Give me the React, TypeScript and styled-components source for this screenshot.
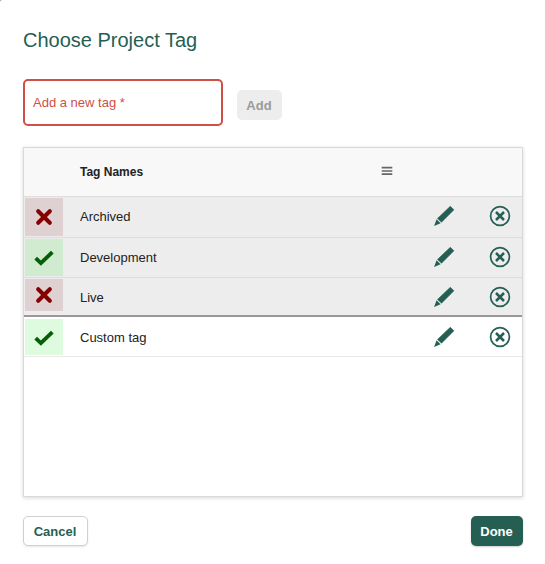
import React from "react";
import styled, { createGlobalStyle } from "styled-components";

const GlobalStyle = createGlobalStyle`
  *, *::before, *::after { box-sizing: border-box; }
  body {
    margin: 0;
    background: #8a8a8a;
    color: #222;
    font-family: "Liberation Sans", Arial, sans-serif;
    font-size: 13px;
  }
`;

const Dialog = styled.main`
  display: flex;
  flex-direction: column;
  width: 545px;
  height: 564px;
  padding: 28px 22px 0 23px;
  border-top-left-radius: 2px;
  background: #fff;
`;

const Title = styled.h1`
  margin: 0;
  color: #255f53;
  font-size: 20px;
  font-weight: 400;
  line-height: 24px;
`;

const AddForm = styled.form`
  display: flex;
  align-items: center;
  gap: 14px;
  margin-top: 27px;
`;

const TagInput = styled.input`
  width: 200px;
  height: 47px;
  padding: 0 8px;
  border: 2px solid #ce5047;
  border-radius: 5px;
  outline: 0;
  background: #fff;
  font: 13px "Liberation Sans", Arial, sans-serif;
  &::placeholder { color: #ce5047; opacity: 1; }
`;

const Button = styled.button<{ $kind: "muted" | "plain" | "primary" }>`
  height: 30px;
  padding: 0 1px 0 0;
  border-radius: 5px;
  font: 700 13px "Liberation Sans", Arial, sans-serif;
  ${({ $kind }) =>
    $kind === "muted"
      ? "width: 45px; margin-top: 5px; border: 0; background: #ededed; color: #9b9b9b;"
      : $kind === "plain"
      ? "width: 65px; border: 1px solid #d0d0d0; background: #fff; color: #255f53; box-shadow: 0 1px 2px rgba(0,0,0,.1);"
      : "width: 52px; border: 0; background: #255f53; color: #fff; box-shadow: 0 1px 2px rgba(0,0,0,.2);"}
`;

const Grid = styled.section`
  width: 500px;
  height: 350px;
  margin-top: 21px;
  border: 1px solid #d9d9d9;
  background: #fff;
  box-shadow: 0 1px 4px rgba(0, 0, 0, 0.16);
`;

const GridHeader = styled.div`
  display: grid;
  grid-template-columns: 56px 301px 1fr 44px;
  align-items: center;
  height: 49px;
  border-bottom: 1px solid #dcdcdc;
  background: #f8f8f8;
  font-size: 12px;
  font-weight: 700;
`;

const HeaderName = styled.span`
  grid-column: 2;
  line-height: 16px;
`;

const MenuIcon = styled.svg`
  display: block;
  margin-bottom: 2px;
`;

const Row = styled.div<{ $height: number; $locked: boolean; $divider: boolean }>`
  display: grid;
  grid-template-columns: 56px 1fr 20px 36px 20px 12px;
  height: ${({ $height }) => $height}px;
  margin-bottom: ${({ $divider }) => ($divider ? 1 : 0)}px;
  border-bottom: ${({ $divider, $locked }) =>
    $divider ? "2px solid #999" : $locked ? "1px solid #dcdcdc" : "1px solid #e9e9e9"};
  background: ${({ $locked }) => ($locked ? "#ededed" : "#fff")};
`;

const Status = styled.div<{ $on: boolean; $locked: boolean; $height: number }>`
  display: flex;
  justify-content: center;
  width: 38px;
  height: ${({ $height }) => $height}px;
  margin: 1px 0 0 1px;
  padding-top: ${({ $on }) => ($on ? 11 : 10)}px;
  background: ${({ $on, $locked }) =>
    $on ? ($locked ? "#d1ebd1" : "#dffbdf") : "#dfd1d1"};
`;

const StatusIcon = styled.svg<{ $lift: number }>`
  display: block;
  margin-top: ${({ $lift }) => -$lift}px;
`;

const Name = styled.span`
  line-height: 39px;
`;

const Action = styled.button<{ $column: number }>`
  grid-column: ${({ $column }) => $column};
  width: 20px;
  height: 20px;
  margin: 9px 0 0;
  padding: 0;
  border: 0;
  background: none;
  color: #255f53;
`;

const Icon = styled.svg`
  display: block;
  overflow: visible;
`;

const Footer = styled.footer`
  display: flex;
  justify-content: space-between;
  width: 500px;
  margin-top: 19px;
`;

const Check = () => (
  <StatusIcon $lift={0} width="20" height="17" viewBox="0 0 20 17">
    <path d="M1.7 8.1 6.9 13.1 18.3 2.2" fill="none" stroke="#056005" strokeWidth="3.9" />
  </StatusIcon>
);

const Cross = ({ lift }: { lift: number }) => (
  <StatusIcon $lift={lift} width="18" height="18" viewBox="0 0 18 18">
    <path d="M3.2 3.2 14.8 14.8M14.8 3.2 3.2 14.8" fill="none" stroke="#850000" strokeWidth="4.1" strokeLinecap="round" />
  </StatusIcon>
);

const Pencil = () => (
  <Icon width="20" height="20" viewBox="0 0 20 20">
    <path d="M16.3 .3 19.9 3.8 7.5 16.2 3.5 12.4Z" fill="currentColor" stroke="currentColor" strokeWidth=".6" strokeLinejoin="round" />
    <path d="M2.6 13.3 6.6 17.2.1 20Z" fill="currentColor" />
  </Icon>
);

const CircleX = () => (
  <Icon width="20" height="20" viewBox="0 0 20 20">
    <circle cx="10" cy="10" r="9.4" fill="none" stroke="currentColor" strokeWidth="1.7" />
    <path d="M6 6 14 14M14 6 6 14" fill="none" stroke="currentColor" strokeWidth="2.5" />
  </Icon>
);

const tags = [
  { name: "Archived", on: false, locked: true, height: 41, status: 38 },
  { name: "Development", on: true, locked: true, height: 40, status: 37 },
  { name: "Live", on: false, locked: true, height: 39, status: 32 },
  { name: "Custom tag", on: true, locked: false, height: 39, status: 36 },
];

export default function App() {
  return (
    <>
      <GlobalStyle />
      <Dialog>
        <Title>Choose Project Tag</Title>
        <AddForm>
          <TagInput placeholder="Add a new tag *" aria-label="Add a new tag" />
          <Button type="button" $kind="muted" disabled>Add</Button>
        </AddForm>
        <Grid>
          <GridHeader>
            <HeaderName>Tag Names</HeaderName>
            <MenuIcon width="12" height="10" viewBox="0 0 12 10">
              <path d="M.7 1.7H11.3M.7 5H11.3M.7 8.2H11.3" stroke="#666" strokeWidth="1.7" />
            </MenuIcon>
          </GridHeader>
          {tags.map(({ name, on, locked, height, status }) => (
            <Row key={name} $height={height} $locked={locked} $divider={name === "Live"}>
              <Status $on={on} $locked={locked} $height={status}>
                {on ? <Check /> : <Cross lift={name === "Live" ? 3 : 0} />}
              </Status>
              <Name>{name}</Name>
              <Action $column={3} aria-label={`Edit ${name}`}><Pencil /></Action>
              <Action $column={5} aria-label={`Remove ${name}`}><CircleX /></Action>
            </Row>
          ))}
        </Grid>
        <Footer>
          <Button type="button" $kind="plain">Cancel</Button>
          <Button type="button" $kind="primary">Done</Button>
        </Footer>
      </Dialog>
    </>
  );
}
